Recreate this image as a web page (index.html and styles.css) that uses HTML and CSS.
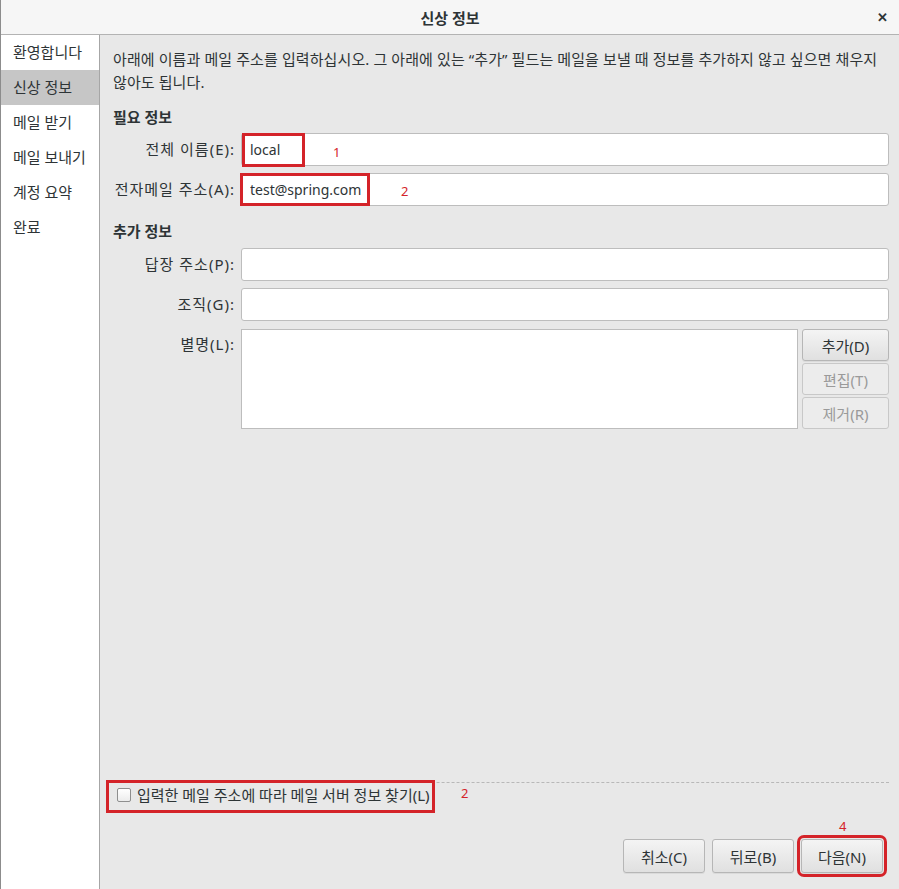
FILE: index.html
```html
<!DOCTYPE html>
<html lang="ko">
<head>
  <meta charset="UTF-8">
  <title>신상 정보</title>
  <link rel="stylesheet" href="styles.css">
</head>
<body>
  <div class="window">
    <div class="titlebar">
      <span class="title">신상 정보</span>
      <span class="close">✕</span>
    </div>
    <div class="main">
      <ul class="sidebar">
        <li>환영합니다</li>
        <li class="active">신상 정보</li>
        <li>메일 받기</li>
        <li>메일 보내기</li>
        <li>계정 요약</li>
        <li>완료</li>
      </ul>
      <div class="content">
        <p class="intro">아래에 이름과 메일 주소를 입력하십시오. 그 아래에 있는 “추가” 필드는 메일을 보낼 때 정보를 추가하지 않고 싶으면 채우지 않아도 됩니다.</p>

        <h2>필요 정보</h2>
        <div class="form-grid">
          <label>전체 이름(E):</label>
          <div class="field">
            <input type="text" value="local">
            <span class="mark mark-name"></span>
            <span class="num num-name">1</span>
          </div>
          <label>전자메일 주소(A):</label>
          <div class="field">
            <input type="text" value="test@spring.com">
            <span class="mark mark-mail"></span>
            <span class="num num-mail">2</span>
          </div>
        </div>

        <h2 class="second">추가 정보</h2>
        <div class="form-grid">
          <label>답장 주소(P):</label>
          <div class="field"><input type="text"></div>
          <label>조직(G):</label>
          <div class="field"><input type="text"></div>
          <label>별명(L):</label>
          <div class="alias">
            <div class="alias-list"></div>
            <div class="alias-buttons">
              <button class="btn">추가(D)</button>
              <button class="btn" disabled>편집(T)</button>
              <button class="btn" disabled>제거(R)</button>
            </div>
          </div>
        </div>

        <div class="spacer"></div>

        <div class="check-row">
          <label class="check">
            <input type="checkbox">
            <span>입력한 메일 주소에 따라 메일 서버 정보 찾기(L)</span>
          </label>
          <span class="num num-check">2</span>
        </div>

        <div class="actions">
          <button class="btn wide">취소(C)</button>
          <button class="btn wide">뒤로(B)</button>
          <div class="next-wrap">
            <span class="num num-next">4</span>
            <button class="btn wide marked">다음(N)</button>
          </div>
        </div>
      </div>
    </div>
  </div>
</body>
</html>
```

FILE: styles.css
```css
body {
  margin: 0;
  font-family: "Noto Sans", "Noto Sans CJK KR", sans-serif;
  font-size: 15px;
  color: #2e3436;
  background: #e8e8e8;
}

.window {
  width: 899px;
  height: 889px;
  display: flex;
  flex-direction: column;
  border-left: 1px solid #8c8c8c;
  box-sizing: border-box;
}

.titlebar {
  height: 34px;
  flex: none;
  background: #f6f6f6;
  border-bottom: 1px solid #b3b3b3;
  display: flex;
  align-items: center;
  justify-content: center;
  position: relative;
}

.title {
  font-weight: bold;
  font-size: 15px;
}

.close {
  position: absolute;
  right: 11px;
  top: 8px;
  font-size: 13px;
  font-weight: bold;
  color: #2e3436;
}

.main {
  flex: 1;
  display: flex;
  min-height: 0;
}

.sidebar {
  list-style: none;
  margin: 0;
  padding: 0;
  width: 98px;
  flex: none;
  background: #ffffff;
  border-right: 1px solid #a6a6a6;
}

.sidebar li {
  height: 35px;
  line-height: 35px;
  padding-left: 12px;
  font-size: 15px;
  white-space: nowrap;
}

.sidebar li.active {
  background: #c6c6c6;
}

.content {
  flex: 1;
  display: flex;
  flex-direction: column;
  padding: 13px 10px 0 13px;
  background: #e8e8e8;
}

.intro {
  margin: 0;
  line-height: 23px;
  font-size: 15px;
  letter-spacing: 0.1px;
  word-break: keep-all;
}

h2 {
  margin: 13px 0 6px;
  font-size: 15px;
  font-weight: bold;
  line-height: 20px;
}

h2.second {
  margin-top: 15px;
  margin-bottom: 7px;
}

.form-grid {
  display: grid;
  grid-template-columns: 122px 1fr;
  column-gap: 6px;
  row-gap: 7px;
}

.form-grid label {
  text-align: right;
  line-height: 33px;
  white-space: nowrap;
  letter-spacing: 1px;
}

.field {
  position: relative;
}

.field input {
  width: 100%;
  height: 33px;
  box-sizing: border-box;
  border: 1px solid #bdbdbd;
  border-radius: 3px;
  background: #ffffff;
  padding: 0 8px;
  font-family: inherit;
  font-size: 14px;
  color: #2e3436;
}

.mark {
  position: absolute;
  border: 3px solid #d42329;
  top: 0;
  box-sizing: border-box;
}

.mark-name {
  left: 1px;
  width: 63px;
  height: 34px;
}

.mark-mail {
  left: -1px;
  width: 130px;
  height: 33px;
}

.num {
  position: absolute;
  color: #d42329;
  font-size: 13px;
}

.num-name {
  left: 92px;
  top: 10px;
}

.num-mail {
  left: 160px;
  top: 9px;
}

.alias {
  display: flex;
  gap: 4px;
  margin-top: 1px;
}

.alias-list {
  flex: 1;
  height: 100px;
  background: #ffffff;
  border: 1px solid #bdbdbd;
  box-sizing: border-box;
}

.alias-buttons {
  width: 87px;
  display: flex;
  flex-direction: column;
  gap: 2px;
}

.btn {
  height: 32px;
  border: 1px solid #b6b6b6;
  border-radius: 3px;
  background: linear-gradient(#f4f4f4, #e0e0e0);
  font-family: inherit;
  font-size: 15px;
  color: #2e3436;
  box-shadow: 0 1px 0 rgba(0, 0, 0, 0.06);
  white-space: nowrap;
}

.btn:disabled {
  background: #ececec;
  border-color: #c8c8c8;
  color: #9a9a9a;
  box-shadow: none;
}

.spacer {
  flex: 1;
}

.check-row {
  border-top: 1px dashed #b8b8b8;
  margin-left: -6px;
  padding: 0 0 0 2px;
  position: relative;
}

.check {
  display: inline-flex;
  align-items: center;
  gap: 6px;
  padding: 2px 2px 5px 8px;
  outline: 3px solid #d42329;
  line-height: 20px;
}

.check input {
  appearance: none;
  margin: 0;
  width: 14px;
  height: 14px;
  border: 1px solid #8e8e8e;
  border-radius: 2px;
  background: linear-gradient(#ffffff, #ececec);
}

.num-check {
  left: 354px;
  top: 1px;
}

.actions {
  display: flex;
  justify-content: flex-end;
  gap: 7px;
  padding: 0 6px 16px 0;
  margin-top: 29px;
}

.btn.wide {
  width: 82px;
  height: 34px;
}

.next-wrap {
  position: relative;
}

.num-next {
  top: -22px;
  left: 38px;
}

.btn.marked {
  outline: 3px solid #d42329;
  outline-offset: 1px;
}
```
